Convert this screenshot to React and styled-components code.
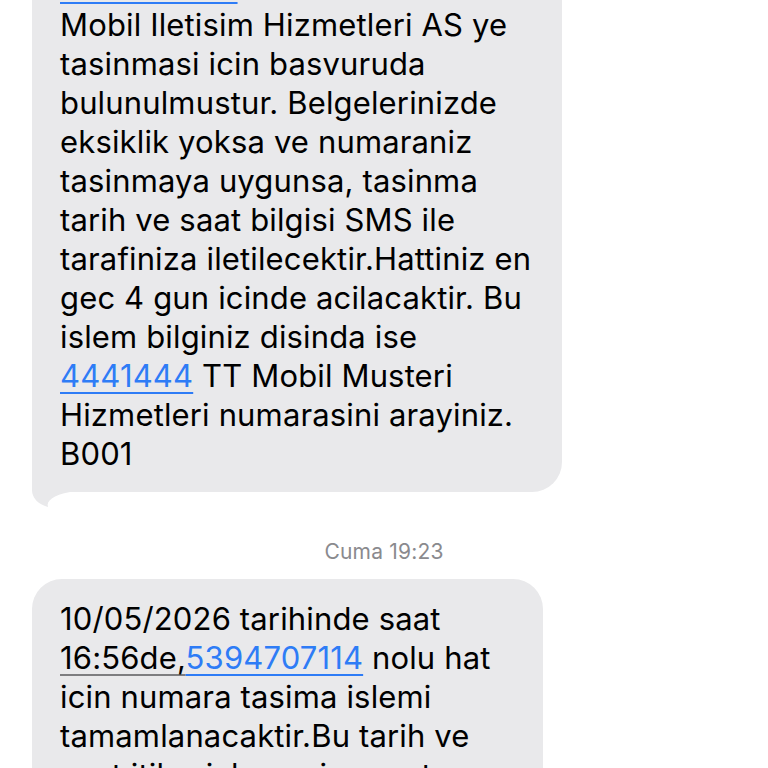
import React from 'react';
import styled, { createGlobalStyle } from 'styled-components';

const GlobalStyle = createGlobalStyle`
  html, body {
    margin: 0;
    padding: 0;
    background: #ffffff;
    overflow: hidden;
  }
  body {
    font-family: "Inter", "Roboto", "Noto Sans", sans-serif;
    -webkit-font-smoothing: antialiased;
  }
`;

const Thread = styled.div`
  display: flex;
  flex-direction: column;
  align-items: flex-start;
  margin-top: -54px;
  padding-left: 32px;
  width: 736px;
`;

const Bubble = styled.div`
  position: relative;
  box-sizing: border-box;
  width: ${p => p.$width}px;
  padding: 20px 28px 19px 28px;
  background: #e9e9eb;
  border-radius: ${p => (p.$tail ? '30px 30px 30px 6px' : '30px')};
  color: #000000;
  font-size: 31px;
  line-height: 39px;
  letter-spacing: 0.15px;
`;

const Line = styled.span`
  display: block;
  white-space: nowrap;
`;

const Link = styled.span`
  color: #2e7cf6;
  text-decoration: underline;
  text-decoration-thickness: 2px;
  text-underline-offset: 5px;
`;

const Detected = styled.span`
  text-decoration: underline;
  text-decoration-color: #7d7d80;
  text-decoration-thickness: 1.5px;
  text-underline-offset: 5px;
`;

const Tail = styled.svg`
  position: absolute;
  left: 0;
  bottom: -15px;
  width: 40px;
  height: 30px;
  overflow: visible;
`;

const Stamp = styled.div`
  align-self: center;
  margin: 48px 0 15px -32px;
  color: #8a8a8e;
  font-size: 21px;
  line-height: 24px;
  letter-spacing: 0.2px;
`;

const first = [
  [<Link key="l">5394707114</Link>, ' nolu hattinizin TT'],
  ['Mobil Iletisim Hizmetleri AS ye'],
  ['tasinmasi icin basvuruda'],
  ['bulunulmustur. Belgelerinizde'],
  ['eksiklik yoksa ve numaraniz'],
  ['tasinmaya uygunsa, tasinma'],
  ['tarih ve saat bilgisi SMS ile'],
  ['tarafiniza iletilecektir.Hattiniz en'],
  ['gec 4 gun icinde acilacaktir. Bu'],
  ['islem bilginiz disinda ise'],
  [<Link key="l">4441444</Link>, ' TT Mobil Musteri'],
  ['Hizmetleri numarasini arayiniz.'],
  ['B001'],
];

const second = [
  ['10/05/2026 tarihinde saat'],
  [<Detected key="d">16:56de,</Detected>, <Link key="l">5394707114</Link>, ' nolu hat'],
  ['icin numara tasima islemi'],
  ['tamamlanacaktir.Bu tarih ve'],
  ['saat itibariyle yeni operatorunuz'],
];

export default function App() {
  return (
    <>
      <GlobalStyle />
      <Thread>
        <Bubble $width={530} $tail>
          {first.map((parts, i) => (
            <Line key={i}>{parts}</Line>
          ))}
          <Tail viewBox="0 0 40 30" aria-hidden="true">
            <path d="M0 0 L0 13 C0 21 6 27 16 30 C14 24 21 18 38 15 L38 0 Z" fill="#e9e9eb" />
          </Tail>
        </Bubble>
        <Stamp>Cuma 19:23</Stamp>
        <Bubble $width={511}>
          {second.map((parts, i) => (
            <Line key={i}>{parts}</Line>
          ))}
        </Bubble>
      </Thread>
    </>
  );
}
